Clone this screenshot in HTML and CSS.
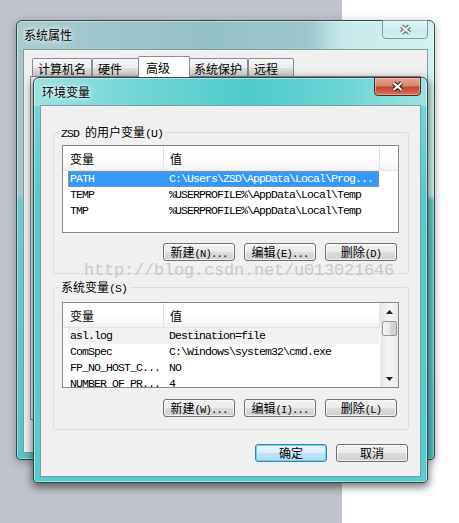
FILE: index.html
```html
<!DOCTYPE html>
<html lang="zh-CN">
<head>
    <meta charset="UTF-8">
    <meta name="viewport" content="width=device-width, initial-scale=1.0">
    <title>环境变量</title>
    <link rel="stylesheet" href="styles.css">
</head>
<body>
    <div class="desktop">
        <div class="desk-right"></div>

        <!-- back window: system properties -->
        <div class="window back-window">
            <div class="titlebar">
                <span class="title">系统属性</span>
                <div class="close-btn inactive">
                    <svg width="13" height="11" viewBox="0 0 13 11">
                        <path d="M2.5 2 L10.5 9 M10.5 2 L2.5 9" stroke="#6a7a7d" stroke-width="4.4" fill="none"/>
                        <path d="M2.5 2 L10.5 9 M10.5 2 L2.5 9" stroke="#eef4f4" stroke-width="2.2" fill="none"/>
                    </svg>
                </div>
            </div>
            <div class="client">
                <div class="tabs">
                    <div class="tab t1">计算机名</div>
                    <div class="tab t2">硬件</div>
                    <div class="tab t3 selected">高级</div>
                    <div class="tab t4">系统保护</div>
                    <div class="tab t5">远程</div>
                </div>
                <div class="tab-panel"></div>
            </div>
        </div>

        <!-- front window: environment variables -->
        <div class="window front-window">
            <div class="titlebar">
                <span class="title">环境变量</span>
                <div class="close-btn active">
                    <svg width="13" height="11" viewBox="0 0 13 11">
                        <path d="M2.5 2 L10.5 9 M10.5 2 L2.5 9" stroke="#3a2320" stroke-width="4.4" fill="none"/>
                        <path d="M2.5 2 L10.5 9 M10.5 2 L2.5 9" stroke="#ffffff" stroke-width="2.2" fill="none"/>
                    </svg>
                </div>
            </div>
            <div class="client">
                <div class="group user-group">
                    <div class="group-title"><span class="m">ZSD </span>的用户变量<span class="m">(U)</span></div>
                    <div class="list user-list">
                        <div class="list-main">
                            <div class="list-header">
                                <div class="col col-name">变量</div>
                                <div class="col col-value">值</div>
                                <div class="col col-fill"></div>
                            </div>
                            <div class="row selected"><span class="cell-name">PATH</span><span class="cell-value">C:\Users\ZSD\AppData\Local\Prog...</span></div>
                            <div class="row"><span class="cell-name">TEMP</span><span class="cell-value">%USERPROFILE%\AppData\Local\Temp</span></div>
                            <div class="row"><span class="cell-name">TMP</span><span class="cell-value">%USERPROFILE%\AppData\Local\Temp</span></div>
                        </div>
                    </div>
                    <div class="btn-row">
                        <button class="btn">新建<span class="m">(N)...</span></button>
                        <button class="btn">编辑<span class="m">(E)...</span></button>
                        <button class="btn">删除<span class="m">(D)</span></button>
                    </div>
                </div>

                <div class="group sys-group">
                    <div class="group-title">系统变量<span class="m">(S)</span></div>
                    <div class="list sys-list">
                        <div class="list-main">
                            <div class="list-header">
                                <div class="col col-name">变量</div>
                                <div class="col col-value">值</div>
                            </div>
                            <div class="row hover"><span class="cell-name">asl.log</span><span class="cell-value">Destination=file</span></div>
                            <div class="row"><span class="cell-name">ComSpec</span><span class="cell-value">C:\Windows\system32\cmd.exe</span></div>
                            <div class="row"><span class="cell-name">FP_NO_HOST_C...</span><span class="cell-value">NO</span></div>
                            <div class="row"><span class="cell-name">NUMBER_OF_PR...</span><span class="cell-value">4</span></div>
                        </div>
                        <div class="scrollbar">
                            <div class="arrow-btn">
                                <svg width="7" height="4" viewBox="0 0 7 4"><polygon points="3.5,0 7,4 0,4" fill="#222"/></svg>
                            </div>
                            <div class="thumb"></div>
                            <div class="track"></div>
                            <div class="arrow-btn">
                                <svg width="7" height="4" viewBox="0 0 7 4"><polygon points="0,0 7,0 3.5,4" fill="#222"/></svg>
                            </div>
                        </div>
                    </div>
                    <div class="btn-row">
                        <button class="btn">新建<span class="m">(W)...</span></button>
                        <button class="btn">编辑<span class="m">(I)...</span></button>
                        <button class="btn">删除<span class="m">(L)</span></button>
                    </div>
                </div>

                <div class="dialog-buttons">
                    <button class="btn default">确定</button>
                    <button class="btn">取消</button>
                </div>
            </div>
        </div>

        <div class="watermark">http://blog.csdn.net/u013021646</div>
    </div>
</body>
</html>
```

FILE: styles.css
```css
body {
    margin: 0;
    font-family: "Noto Sans CJK SC", sans-serif;
    font-size: 12px;
    color: #000;
}
.desktop {
    position: relative;
    width: 459px;
    height: 523px;
    overflow: hidden;
    background-color: #c1c3cc;
}
.desk-right {
    position: absolute;
    left: 342px;
    top: 0;
    right: 0;
    bottom: 0;
    background-color: #fff;
}
.m {
    font-family: "Liberation Mono", monospace;
    font-size: 11.5px;
    letter-spacing: -0.9px;
}

/* windows */
.window {
    position: absolute;
    box-sizing: border-box;
    display: flex;
    flex-direction: column;
    padding: 0 6px 6px;
    border: 1px solid #34494c;
    border-radius: 6px 6px 4px 4px;
}
.back-window {
    left: 16px;
    top: 20px;
    width: 419px;
    height: 440px;
    background:
        linear-gradient(to right, #a9cbcf 0%, #93c2c6 45%, #9cc8cb 70%, #c6eaeb 78%, #d3f1f1 100%) top / 100% 28px no-repeat,
        linear-gradient(to bottom, transparent 0, transparent 174px, #6ccbcb 180px, #52c6c6 100%),
        linear-gradient(to right, #a9c5c9 0%, #b0cdd0 60%, #d3eff0 80%);
    box-shadow: 0 2px 8px rgba(0, 0, 0, 0.3), inset 0 0 0 1px rgba(255, 255, 255, 0.4);
}
.front-window {
    left: 33px;
    top: 77px;
    width: 395px;
    height: 406px;
    padding-bottom: 5px;
    background:
        linear-gradient(to right, #9de1e1 0%, #74d6d6 25%, #4ecbcb 55%, #6fd5d5 80%, #9ee2e2 100%) top / 100% 28px no-repeat,
        linear-gradient(to bottom, #7ad8d8, #52cccc 30%, #55cdcd);
    box-shadow: 0 3px 9px 1px rgba(0, 0, 0, 0.55), inset 0 0 0 1px rgba(255, 255, 255, 0.45);
}
.titlebar {
    display: flex;
    justify-content: space-between;
    align-items: flex-start;
    flex: none;
}
.back-window .titlebar {
    height: 28px;
}
.front-window .titlebar {
    height: 27px;
}
.title {
    align-self: center;
    padding-left: 2px;
    line-height: 16px;
    text-shadow: 0 0 4px #fff, 0 0 8px rgba(255, 255, 255, 0.9);
}
.back-window .title {
    padding-left: 1px;
}
.close-btn {
    margin-top: -1px;
    box-sizing: border-box;
    height: 19px;
    display: flex;
    align-items: center;
    justify-content: center;
    border: 1px solid;
    border-radius: 0 0 4px 4px;
}
.close-btn.inactive {
    width: 46px;
    border-color: #7f9ea1;
    background: linear-gradient(#e2f6f6, #cdeeee 50%, #c3eaea 51%, #d4f2f2);
}
.close-btn.active {
    width: 47px;
    border-color: #4b2b25;
    background: linear-gradient(#e9a896, #d6826c 45%, #c24a30 55%, #d3705a);
    box-shadow: inset 0 0 0 1px rgba(255, 210, 190, 0.5);
}
.client {
    flex: 1;
    display: flex;
    flex-direction: column;
    border: 1px solid #7f9ea1;
    background-color: #f0f0f0;
}

/* tabs in the back window */
.tabs {
    display: flex;
    align-items: flex-end;
    height: 20px;
    margin-top: 6px;
    padding-left: 8px;
}
.tab {
    box-sizing: border-box;
    height: 18px;
    padding: 1px 0 0 5px;
    line-height: 17px;
    white-space: nowrap;
    border: 1px solid #898c95;
    border-bottom: none;
    border-radius: 2px 2px 0 0;
    background: linear-gradient(#f6f6f6, #ececec 50%, #dedede 51%, #d0d0d0);
}
.t1 { width: 60px; }
.t2 { width: 48px; }
.t4 { width: 60px; }
.t5 { width: 46px; }
.tab.selected {
    position: relative;
    z-index: 1;
    width: 52px;
    height: 21px;
    margin: 0 -2px -1px;
    padding-left: 7px;
    line-height: 19px;
    background: #fff;
}
.tab-panel {
    flex: 1;
    margin: 0 6px 32px;
    border: 1px solid #898c95;
    background-color: #fafafa;
}

/* group boxes */
.group {
    position: relative;
    box-sizing: border-box;
    border: 1px solid #d5dfe5;
    border-radius: 3px;
    margin: 0 11px 0 12px;
    padding: 12px 9px 12px 8px;
}
.user-group {
    margin-top: 26px;
    height: 142px;
}
.sys-group {
    margin-top: 13px;
    height: 143px;
    padding-top: 14px;
}
.group-title {
    position: absolute;
    top: -9px;
    left: 4px;
    padding: 0 3px;
    line-height: 16px;
    background-color: #f0f0f0;
    white-space: pre;
}

/* list views */
.list {
    display: flex;
    box-sizing: border-box;
    border: 1px solid #828790;
    background-color: #fff;
    overflow: hidden;
}
.user-list {
    height: 88px;
}
.sys-list {
    height: 86px;
}
.list-main {
    flex: 1;
    overflow: hidden;
}
.list-header {
    display: flex;
    box-sizing: border-box;
    height: 25px;
    border-bottom: 1px solid #e5e5e5;
    background: linear-gradient(#ffffff 0, #ffffff 50%, #f2f3f5 100%);
}
.col {
    box-sizing: border-box;
    padding-top: 2px;
    line-height: 22px;
    border-right: 1px solid #e3e4e6;
}
.col-name {
    width: 101px;
    padding-left: 7px;
}
.col-value {
    width: 216px;
    padding-left: 6px;
}
.col-fill {
    flex: 1;
    border-right: none;
}
.row {
    display: flex;
    box-sizing: border-box;
    width: 311px;
    height: 16px;
    margin-left: 5px;
    line-height: 16px;
    font-family: "Liberation Mono", monospace;
    font-size: 11.5px;
    letter-spacing: -0.9px;
    white-space: nowrap;
}
.cell-name {
    flex: none;
    width: 99px;
    padding-left: 2px;
    overflow: hidden;
}
.row.selected {
    color: #fff;
    background-color: #3399ff;
    border: 1px dotted #c98a3e;
    line-height: 14px;
}
.row.selected .cell-name {
    padding-left: 1px;
}
.row.hover {
    background-color: #f1f1f1;
}

/* scrollbar */
.scrollbar {
    flex: none;
    box-sizing: border-box;
    width: 18px;
    display: flex;
    flex-direction: column;
    align-items: center;
    border-left: 1px solid #ececec;
    background: linear-gradient(to right, #e6e6e6, #f3f3f3 40%, #f3f3f3 60%, #e8e8e8);
}
.arrow-btn {
    height: 17px;
    width: 100%;
    display: flex;
    align-items: center;
    justify-content: center;
}
.thumb {
    box-sizing: border-box;
    width: 15px;
    height: 15px;
    margin-top: 1px;
    border: 1px solid #979797;
    border-radius: 2px;
    background: linear-gradient(to right, #f4f4f4, #e8e8e8 50%, #d6d6d6 51%, #d0d0d0);
}
.track {
    flex: 1;
}

/* buttons */
.btn-row, .dialog-buttons {
    display: flex;
    justify-content: flex-end;
    gap: 9px;
}
.btn-row {
    margin: 10px 2px 0 0;
}
.sys-group .btn-row {
    margin-top: 11px;
}
.dialog-buttons {
    margin: 14px 12px 0 0;
}
.btn {
    box-sizing: border-box;
    width: 72px;
    height: 18px;
    padding: 0;
    border: 1px solid #707070;
    border-radius: 3px;
    background: linear-gradient(#f3f3f3, #ebebeb 50%, #dddddd 51%, #cfcfcf);
    box-shadow: inset 0 0 0 1px rgba(255, 255, 255, 0.7);
    font-family: "Noto Sans CJK SC", sans-serif;
    font-size: 12px;
    line-height: 16px;
    color: #000;
    white-space: nowrap;
}
.btn .m {
    font-size: 10.5px;
    letter-spacing: -0.8px;
}
.btn.default {
    border-color: #3c7fb1;
    background: linear-gradient(#e8f6fd, #d6eefb 50%, #c2e4f7 51%, #b0dbf4);
    box-shadow: inset 0 0 0 1px #69d2fa;
}

.watermark {
    position: absolute;
    left: 84px;
    top: 261px;
    font-family: "Liberation Mono", monospace;
    font-size: 17px;
    letter-spacing: -0.2px;
    line-height: 20px;
    color: #c9c9c9;
    white-space: nowrap;
    pointer-events: none;
}
```
